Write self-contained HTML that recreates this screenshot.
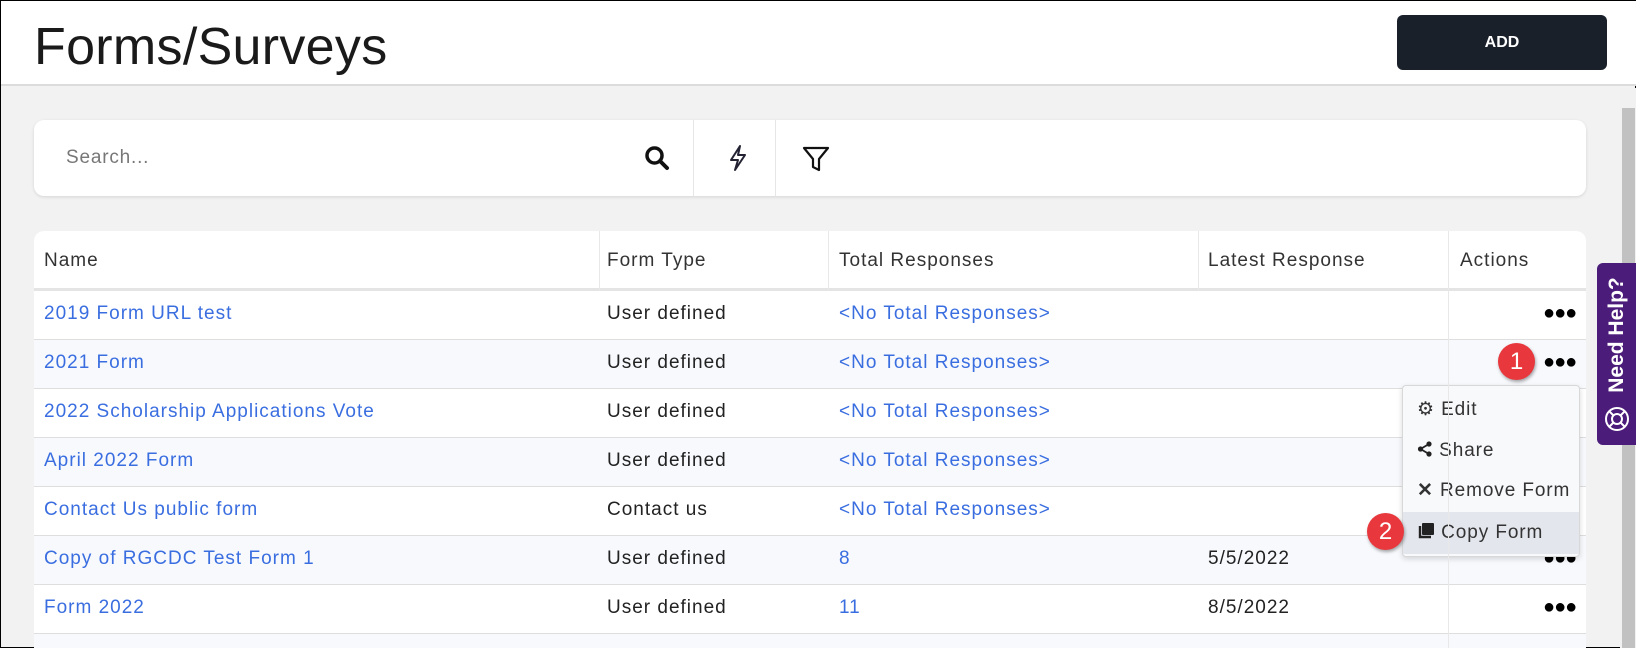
<!DOCTYPE html>
<html style="overflow:hidden;width:1636px;height:648px"><head><style>
*{box-sizing:border-box;margin:0;padding:0}
body{width:1636px;height:648px;overflow:hidden;background:#f2f2f2;font-family:"Liberation Sans",sans-serif;position:relative;border:1px solid #000}
.hdr{position:absolute;left:0;top:0;width:1636px;height:85px;background:#fff;border-bottom:2px solid #dcdcdc}
.title{position:absolute;left:33px;top:16px;font-size:52px;color:#1a1a1a;font-weight:400;letter-spacing:0.3px}
.add{position:absolute;left:1396px;top:14px;width:210px;height:55px;background:#1a202a;border-radius:6px;color:#fff;font-weight:bold;font-size:16px;text-align:center;line-height:55px}
.sb{position:absolute;left:1619px;top:87px;width:17px;height:561px;background:#f1f1f1}
.thumb{position:absolute;left:1621px;top:107px;width:13px;height:541px;background:#c1c1c1}
.search{position:absolute;left:33px;top:119px;width:1552px;height:76px;background:#fff;border-radius:10px;box-shadow:0 1px 3px rgba(0,0,0,.12)}
.search .ph{position:absolute;left:32px;top:27px;font-size:19px;color:#777;letter-spacing:0.8px}
.sep{position:absolute;top:0;width:1px;height:76px;background:#e6e6e6}
.table{position:absolute;left:33px;top:230px;width:1552px;height:418px;background:#fff;border-radius:10px 10px 0 0;overflow:hidden}
.row{position:absolute;left:0;width:1552px;height:49px;border-bottom:1px solid #dedede;font-size:19px;line-height:45px;letter-spacing:1px;color:#222}
.row.alt{background:#f7f9fd}
.row div{position:absolute;top:0;white-space:nowrap}
.th{height:60px;line-height:60px;border-bottom:3px solid #e4e4e4;color:#333}
.lk{color:#3a6ee0}
.vl{position:absolute;top:0;width:1px;height:60px;background:#e8e8e8;z-index:2}
.dots{font-size:20px;letter-spacing:-1px;color:#000;font-weight:bold}
.menu{position:absolute;left:1401px;top:384px;width:178px;height:172px;background:#f8f9fb;border:1px solid #d8d8d8;border-radius:4px;box-shadow:0 2px 6px rgba(0,0,0,.15);font-size:19px;color:#333;letter-spacing:0.9px}
.mi{position:absolute;left:14px;height:40px;line-height:40px;white-space:nowrap}
.hl{position:absolute;left:0;top:126px;width:176px;height:42px;background:#e3e6ec}
.badge{position:absolute;width:37px;height:37px;border-radius:50%;background:#e8383d;color:#fff;font-size:24px;text-align:center;line-height:37px;box-shadow:1px 2px 3px rgba(0,0,0,.35)}
.help{position:absolute;left:1596px;top:262px;width:40px;height:182px;background:#4b1c7a;border-radius:6px 0 0 6px}
.help span{position:absolute;left:-45px;top:60px;transform:rotate(-90deg);color:#fff;font-weight:bold;font-size:21px;width:130px;text-align:center}
</style></head><body>
<div class="hdr"><div class="title">Forms/Surveys</div><div class="add">ADD</div></div>
<div class="sb"></div><div class="thumb"></div>
<div class="search"><div class="ph">Search...</div>
<svg style="position:absolute;left:610px;top:25px" width="26" height="26" viewBox="0 0 26 26"><circle cx="10.5" cy="10.5" r="7.5" fill="none" stroke="#111" stroke-width="3.5"/><line x1="16" y1="16" x2="23" y2="23" stroke="#111" stroke-width="4" stroke-linecap="round"/></svg>
<div class="sep" style="left:659px"></div>
<svg style="position:absolute;left:692px;top:24px" width="24" height="28" viewBox="0 0 24 28"><path d="M14 2 L5 16 H12 L9 26 L19 11 H12 Z" fill="none" stroke="#223" stroke-width="2" stroke-linejoin="round"/></svg>
<div class="sep" style="left:741px"></div>
<svg style="position:absolute;left:768px;top:25px" width="28" height="28" viewBox="0 0 28 28"><path d="M2 3 H26 L17 14 V25 L11 22 V14 Z" fill="none" stroke="#111" stroke-width="2.2" stroke-linejoin="round"/></svg>
</div>
<div class="table">
<div class="vl" style="left:565px"></div><div class="vl" style="left:794px"></div><div class="vl" style="left:1164px"></div><div class="vl" style="left:1414px;height:418px"></div>
<div class="row th" style="top:0"><div style="left:10px">Name</div><div style="left:573px">Form Type</div><div style="left:805px">Total Responses</div><div style="left:1174px">Latest Response</div><div style="left:1426px">Actions</div></div>
<div class="row" style="top:60px"><div class="lk" style="left:10px">2019 Form URL test</div><div style="left:573px">User defined</div><div class="lk" style="left:805px">&lt;No Total Responses&gt;</div><div class="dots" style="left:1509px">●●●</div></div>
<div class="row alt" style="top:109px"><div class="lk" style="left:10px">2021 Form</div><div style="left:573px">User defined</div><div class="lk" style="left:805px">&lt;No Total Responses&gt;</div><div class="dots" style="left:1509px">●●●</div></div>
<div class="row" style="top:158px"><div class="lk" style="left:10px">2022 Scholarship Applications Vote</div><div style="left:573px">User defined</div><div class="lk" style="left:805px">&lt;No Total Responses&gt;</div></div>
<div class="row alt" style="top:207px"><div class="lk" style="left:10px">April 2022 Form</div><div style="left:573px">User defined</div><div class="lk" style="left:805px">&lt;No Total Responses&gt;</div></div>
<div class="row" style="top:256px"><div class="lk" style="left:10px">Contact Us public form</div><div style="left:573px">Contact us</div><div class="lk" style="left:805px">&lt;No Total Responses&gt;</div></div>
<div class="row alt" style="top:305px"><div class="lk" style="left:10px">Copy of RGCDC Test Form 1</div><div style="left:573px">User defined</div><div class="lk" style="left:805px">8</div><div style="left:1174px">5/5/2022</div><div class="dots" style="left:1509px">●●●</div></div>
<div class="row" style="top:354px"><div class="lk" style="left:10px">Form 2022</div><div style="left:573px">User defined</div><div class="lk" style="left:805px">11</div><div style="left:1174px">8/5/2022</div><div class="dots" style="left:1509px">●●●</div></div>
<div class="row alt" style="top:403px"><div class="lk" style="left:10px">form test</div><div style="left:573px">User defined</div><div class="lk" style="left:805px">&lt;No Total Responses&gt;</div></div>
</div>
<div class="menu">
<div class="hl"></div>
<div class="mi" style="top:4px">⚙ Edit</div>
<div class="mi" style="top:45px"><svg width="16" height="16" viewBox="0 0 16 16" style="vertical-align:-1px"><circle cx="12" cy="3" r="2.6" fill="#222"/><circle cx="3.5" cy="8" r="2.6" fill="#222"/><circle cx="12" cy="13" r="2.6" fill="#222"/><path d="M12 3 L3.5 8 L12 13" stroke="#222" stroke-width="1.8" fill="none"/></svg> Share</div>
<div class="mi" style="top:85px"><b>✕</b> Remove Form</div>
<div class="mi" style="top:127px"><svg width="18" height="18" viewBox="0 0 18 18" style="vertical-align:-2px"><rect x="5" y="1" width="12" height="12" rx="1" fill="#222"/><path d="M3 4 V15 H14" stroke="#222" stroke-width="2.4" fill="none"/></svg> Copy Form</div>
</div>
<div class="badge" style="left:1497px;top:342px">1</div>
<div class="badge" style="left:1366px;top:512px">2</div>
<div class="help"><span>Need Help?</span>
<svg style="position:absolute;left:6px;top:142px" width="28" height="28" viewBox="0 0 28 28"><circle cx="14" cy="14" r="11" fill="none" stroke="#fff" stroke-width="2"/><circle cx="14" cy="14" r="5" fill="none" stroke="#fff" stroke-width="2"/><path d="M6 6 L10.5 10.5 M22 6 L17.5 10.5 M6 22 L10.5 17.5 M22 22 L17.5 17.5" stroke="#fff" stroke-width="2"/></svg>
</div>
</body></html>
